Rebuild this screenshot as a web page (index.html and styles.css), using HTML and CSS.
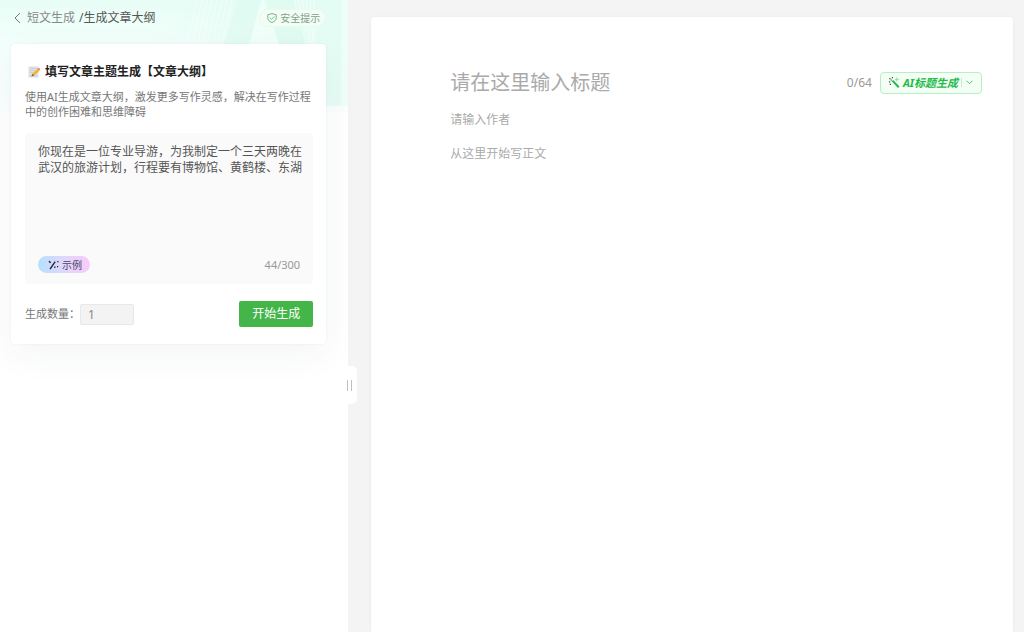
FILE: index.html
```html
<!DOCTYPE html>
<html lang="zh-CN">
<head>
<meta charset="utf-8">
<title>生成文章大纲</title>
<link rel="stylesheet" href="styles.css">
</head>
<body>
<div class="app">
  <aside class="panel">
    <svg class="backdrop" viewBox="0 0 348 112" preserveAspectRatio="none" aria-hidden="true">
      <defs>
        <linearGradient id="mint" x1="0" y1="0" x2="0" y2="1">
          <stop offset="0" stop-color="#e8fdf6"/>
          <stop offset=".4" stop-color="#f3fffc"/>
          <stop offset="1" stop-color="#fbfefe"/>
        </linearGradient>
        <linearGradient id="side" x1="0" y1="0" x2="1" y2="0">
          <stop offset="0" stop-color="#e0fbf2" stop-opacity="0"/>
          <stop offset="1" stop-color="#e0fbf2" stop-opacity=".8"/>
        </linearGradient>
      </defs>
      <path fill="url(#mint)" d="M0 0h348v112H0z"/>
      <path fill="url(#side)" d="M150 0h198v106H150z"/>
      <path fill="#dcfaf0" opacity=".6" d="M238 0h22l-11 44h-25zM266 0h28l14 44h-30z"/>
      <path fill="#f3fffb" opacity=".7" d="M262 0h2l15 44h-30z"/>
      <path fill="#f6fffc" opacity=".6" d="M341 0h7v106h-7z"/>
      <path stroke="#f8fffd" opacity=".7" fill="none" d="M197 0l-10 44M202 0l-10 44M207 0l-10 44M212 0l-10 44M217 0l-10 44M222 0l-10 44M227 0l-10 44M232 0l-10 44M294 0l12 44M298 0l10 44M302 0l8 44M306 0l5 44M310 0l3 44M314 0v44"/>
    </svg>
    <header class="topbar">
      <nav class="crumbs">
        <a class="back" href="#">
          <svg width="7" height="12" viewBox="0 0 7 12" aria-hidden="true"><path d="M6 1L1 6l5 5" fill="none" stroke="#777" stroke-width="1"/></svg>
          短文生成</a>
        <span class="current">/生成文章大纲</span>
      </nav>
      <button class="safety" type="button">
        <svg width="10" height="10" viewBox="0 0 10 10" fill="none" aria-hidden="true"><path d="M5 .6L9.2 1.7v3.2C9.2 7.3 7.4 8.6 5 9.5 2.6 8.6.8 7.3.8 4.9V1.7z" stroke="#86ad86"/><path d="M2.8 4.8l1.7 1.6 2.9-3" stroke="#4fdc78"/></svg>
        安全提示
      </button>
    </header>
    <form class="card">
      <h1 class="card-title">
        <svg width="12" height="12" viewBox="0 0 12 12" aria-hidden="true"><path fill="#dddfe2" d="M.5.5h10v11H.5z"/><path stroke="#c3c8cd" stroke-width=".6" d="M2 2.5h7M2 4.5h5M2 6.5h3M2 9.8h7"/><path fill="#f2b32c" d="M9.6 2.7l1.9 1.8-5.2 5.1-1.9-1.8z"/><path fill="#d9776f" d="M9.6 2.7l.7-.6c.8-.5 2 .7 1.6 1.5l-.4.9z"/><path fill="#8a6237" d="M4.4 7.8l1.9 1.8-2.9 1z"/></svg>
        填写文章主题生成【文章大纲】
      </h1>
      <p class="desc">使用AI生成文章大纲，激发更多写作灵感，解决在写作过程中的创作困难和思维障碍</p>
      <div class="prompt">
        <textarea class="prompt-text" aria-label="文章主题" maxlength="300">你现在是一位专业导游，为我制定一个三天两晚在武汉的旅游计划，行程要有博物馆、黄鹤楼、东湖</textarea>
        <div class="prompt-foot">
          <button class="example" type="button">
            <svg width="11" height="10" viewBox="0 0 11 10" aria-hidden="true"><path stroke="#25213c" stroke-width="1.4" d="M2 9.2L7.2 1.6"/><path fill="#25213c" d="M.4 1.6L1.6.8l1.6 1.6L2 3.2zM9.2 1h1.3v1.3H9.2zM6.2 6.6h1.3v1.3H6.2zM9 6h1.2v1.2H9z"/></svg>
            示例
          </button>
          <span class="prompt-count">44/300</span>
        </div>
      </div>
      <div class="actions">
        <label class="qty-label" for="qty">生成数量：</label>
        <input class="qty" id="qty" type="text" value="1">
        <button class="generate" type="button">开始生成</button>
      </div>
    </form>
    <button class="handle" type="button" aria-label="调整宽度"><span class="grip"></span></button>
  </aside>
  <main class="workspace">
    <article class="sheet">
      <div class="title-row">
        <input class="title-input" type="text" placeholder="请在这里输入标题" aria-label="标题">
        <span class="title-count">0/64</span>
        <button class="ai-title" type="button">
          <svg width="11" height="12" viewBox="0 0 11 12" aria-hidden="true"><path stroke="#1fbb4a" stroke-width="2" d="M3.4 3.6l6.4 6.6"/><path fill="#35523c" d="M.3 1h1.2v1.2H.3zM2.8 0H4v1.2H2.8zM0 4.2h1.2v1.2H0zM1.6 2.4h1.2v1.2H1.6zM.8 6.8H2V8H.8z"/><path fill="#8be8a6" d="M7.8 0l.8 1.8 1.9.7-1.9.8-.8 1.8L7 3.3l-1.8-.8L7 1.8z"/></svg>
          <span class="ai-label">AI标题生成</span>
          <span class="ai-more"><svg width="7" height="5" viewBox="0 0 7 5" aria-hidden="true"><path d="M.5.7l3 3 3-3" fill="none" stroke="#45c768"/></svg></span>
        </button>
      </div>
      <input class="author-input" type="text" placeholder="请输入作者" aria-label="作者">
      <textarea class="body-input" placeholder="从这里开始写正文" aria-label="正文"></textarea>
    </article>
  </main>
</div>
</body>
</html>
```
FILE: styles.css
```css
* { box-sizing: border-box; }

body {
  margin: 0;
  background: #f4f4f4;
  color: #333;
  font: 12px/16px "Noto Sans", "Noto Sans CJK SC", sans-serif;
}

button, input, textarea {
  margin: 0;
  padding: 0;
  border: 0;
  background: none;
  color: inherit;
  font: inherit;
  outline: 0;
}

button { cursor: pointer; }
svg { flex: none; }

.app {
  display: flex;
  min-height: 100vh;
}

.panel {
  position: relative;
  flex: 0 0 34%;
  background: #fff;
}

.backdrop {
  position: absolute;
  top: 0;
  left: 0;
  width: 100%;
  height: 112px;
}

.topbar {
  position: relative;
  display: flex;
  justify-content: space-between;
  align-items: center;
  height: 44px;
  padding: 0 22px 9px 14px;
}

.crumbs {
  display: flex;
  gap: 4px;
}

.back {
  display: flex;
  align-items: center;
  gap: 6px;
  color: #888;
  text-decoration: none;
}

.current { color: #555; }

.safety {
  display: flex;
  align-items: center;
  gap: 3px;
  height: 18px;
  padding: 0 5px 0 7px;
  border: 1px solid #e9fbe9;
  border-radius: 9px;
  background: #f1fdf6;
  color: #86a084;
  font-size: 10px;
}

.card {
  position: relative;
  margin: 0 22px 0 11px;
  padding: 20px 13px 17px 14px;
  border-radius: 4px;
  background: #fff;
  box-shadow: 0 0 2px rgba(0, 40, 30, .08), 0 10px 36px rgba(30, 60, 80, .05);
}

.card-title {
  display: flex;
  align-items: center;
  gap: 5px;
  margin: 0 0 9px;
  padding-left: 3px;
  color: #222;
  font-size: 12px;
  line-height: 16px;
}

.desc {
  margin: 0 0 14px;
  color: #777;
  font-size: 11px;
  line-height: 15px;
}

.prompt {
  padding: 11px 13px;
  border-radius: 4px;
  background: #fafafa;
}

.prompt-text {
  display: block;
  width: calc(100% + 6px);
  height: 112px;
  color: #555;
  resize: none;
  overflow: hidden;
}

.prompt-foot {
  display: flex;
  justify-content: space-between;
  align-items: center;
}

.example {
  display: flex;
  align-items: center;
  gap: 3px;
  height: 17px;
  padding: 0 8px 0 10px;
  border-radius: 9px;
  background: linear-gradient(90deg, #b4e2fd, #dcd8fd 45%, #f9cbfa);
  color: #4a4468;
  font-size: 10px;
}

.prompt-count {
  color: #999;
  font-size: 11px;
}

.actions {
  display: flex;
  align-items: center;
  margin-top: 17px;
}

.qty-label {
  color: #777;
  font-size: 11px;
}

.qty {
  width: 54px;
  height: 21px;
  padding: 0 7px;
  border: 1px solid #e8e8e8;
  border-radius: 2px;
  background: #f3f3f3;
  color: #888;
}

.generate {
  height: 26px;
  margin-left: auto;
  padding: 0 13px;
  border-radius: 2px;
  background: #43b549;
  color: #fff;
}

.handle {
  position: absolute;
  top: 366px;
  right: -9px;
  z-index: 1;
  width: 15px;
  height: 38px;
  border-radius: 0 5px 5px 0;
  background: #fff;
}

.grip {
  display: block;
  width: 5px;
  height: 11px;
  margin-left: 5px;
  border: solid #bbc0c8;
  border-width: 0 1px;
}

.workspace {
  display: flex;
  flex: 1;
  padding: 17px 11px 0 23px;
}

.sheet {
  display: flex;
  flex: 1;
  flex-direction: column;
  padding: 50px 31px 0 79px;
  border-radius: 4px 4px 0 0;
  background: #fff;
  box-shadow: 0 0 3px rgba(0, 0, 0, .06);
}

.title-row {
  display: flex;
  align-items: center;
  height: 31px;
}

.title-input {
  flex: 1;
  min-width: 0;
  height: 31px;
  font-size: 20px;
}

.title-count {
  margin-right: 8px;
  color: #999;
}

.ai-title {
  display: flex;
  align-items: center;
  gap: 3px;
  height: 22px;
  padding: 0 8px;
  border: 1px solid #b5efc2;
  border-radius: 4px;
  background: #f3fef5;
  color: #1fbb4a;
  font-size: 11px;
}

.ai-label {
  font-style: italic;
  font-weight: 700;
}

.ai-more {
  display: flex;
  padding: 2px 0 2px 4px;
  border-left: 1px solid #c4efce;
}

.author-input {
  height: 20px;
  margin: 11px 0 15px;
}

.body-input {
  flex: 1;
  line-height: 20px;
  resize: none;
}

::placeholder {
  color: #aaa;
  opacity: 1;
}
```
